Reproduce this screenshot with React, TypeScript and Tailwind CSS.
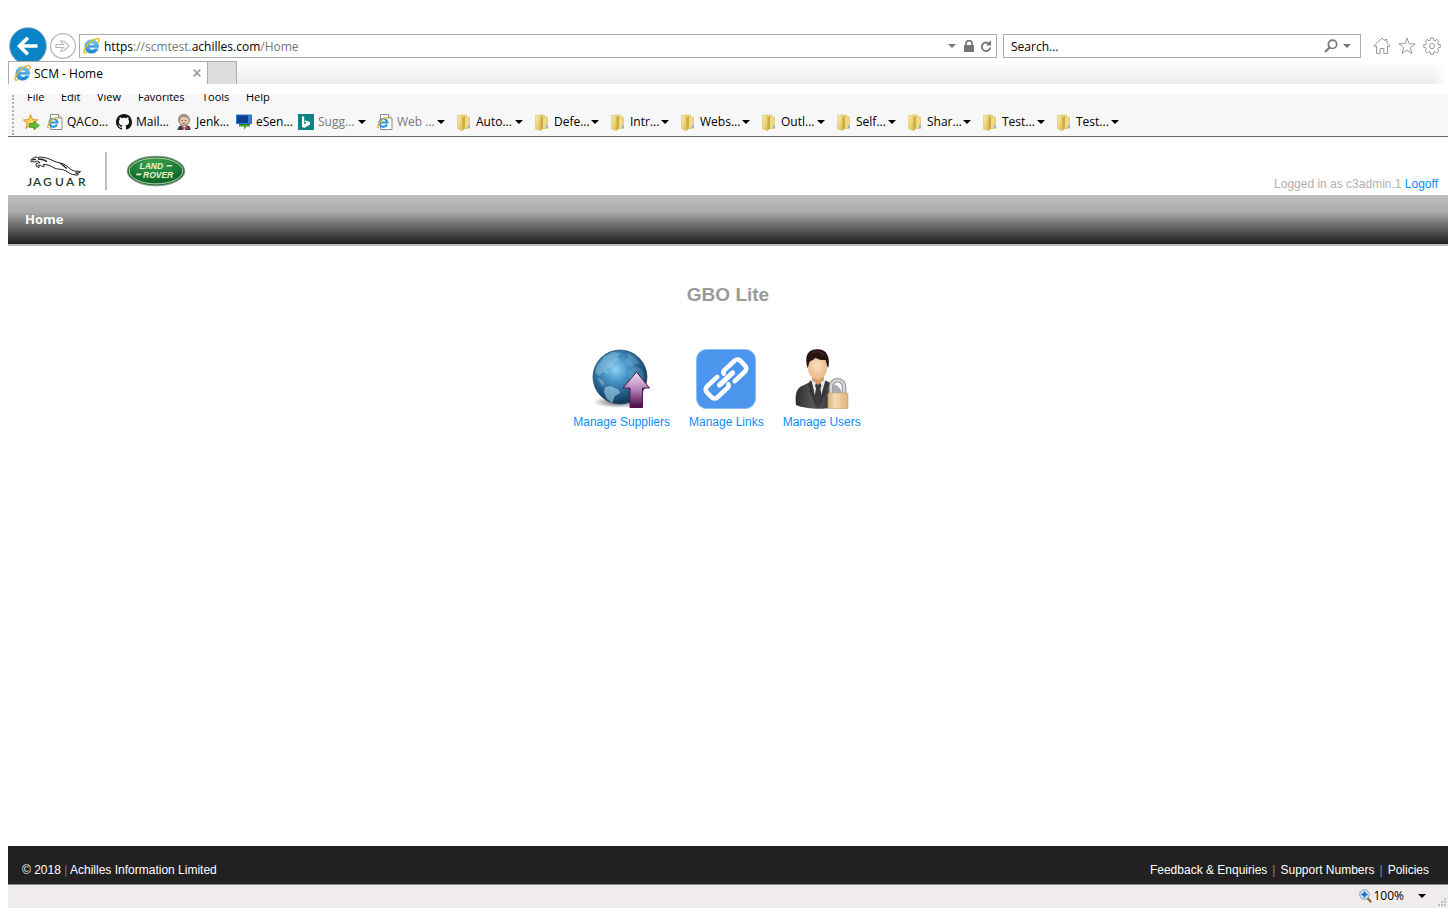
import React from "react";

type Kind = "page" | "github" | "jenkins" | "sensor" | "bing" | "folder";

type Favorite = {
  label: string;
  kind: Kind;
  menu?: boolean;
  muted?: boolean;
  width: string;
};

const favorites: Favorite[] = [
  { label: "QACo...", kind: "page", width: "w-[69px]" },
  { label: "Mail...", kind: "github", width: "w-[60px]" },
  { label: "Jenk...", kind: "jenkins", width: "w-[60px]" },
  { label: "eSen...", kind: "sensor", width: "w-[62px]" },
  { label: "Sugg...", kind: "bing", menu: true, muted: true, width: "w-[79px]" },
  { label: "Web ...", kind: "page", menu: true, muted: true, width: "w-[79px]" },
  { label: "Auto...", kind: "folder", menu: true, width: "w-[78px]" },
  { label: "Defe...", kind: "folder", menu: true, width: "w-[76px]" },
  { label: "Intr...", kind: "folder", menu: true, width: "w-[70px]" },
  { label: "Webs...", kind: "folder", menu: true, width: "w-[81px]" },
  { label: "Outl...", kind: "folder", menu: true, width: "w-[75px]" },
  { label: "Self...", kind: "folder", menu: true, width: "w-[71px]" },
  { label: "Shar...", kind: "folder", menu: true, width: "w-[75px]" },
  { label: "Test...", kind: "folder", menu: true, width: "w-[74px]" },
  { label: "Test...", kind: "folder", menu: true, width: "w-[74px]" },
];

const menus = [
  { label: "File", width: "w-[34px]" },
  { label: "Edit", width: "w-[36px]" },
  { label: "View", width: "w-[41px]" },
  { label: "Favorites", width: "w-[64px]" },
  { label: "Tools", width: "w-[44px]" },
  { label: "Help", width: "w-[40px]" },
];

function BrowserE() {
  return (
    <svg width="17" height="18" viewBox="0 0 18 18" className="shrink-0" aria-hidden="true">
      <defs>
        <linearGradient id="eBlue" x1="0" y1="0" x2="0" y2="1">
          <stop offset="0" stopColor="#6fcbf5" />
          <stop offset="1" stopColor="#1b83cf" />
        </linearGradient>
      </defs>
      <path
        d="M9.200 2.500c4.300 0 7.300 3 7.300 7.300v.9H6.400c.2 1.600 1.400 2.600 3.100 2.600 1.200 0 2.100-.5 2.600-1.300h4c-.9 2.900-3.400 4.700-6.900 4.700-4.400 0-7.300-2.900-7.300-7 0-4.300 3-7.200 7.300-7.200zM6.400 8.200h6c-.2-1.500-1.300-2.500-3-2.500s-2.800 1-3 2.500z"
        fill="url(#eBlue)"
        fillRule="evenodd"
        stroke="#1f7fc4"
        strokeWidth=".4"
      />
      <path d="M3.600 16.200C1.600 17.200.6 16 1.400 13.600 2.500 10.300 6 5.800 10 3.200 13.600.8 16.800.4 16.900 2.500c0 1-.4 2-.9 2.900" fill="none" stroke="#f0b51d" strokeWidth="1.500" strokeLinecap="round" />
    </svg>
  );
}

function PageIcon() {
  return (
    <svg width="16" height="16" viewBox="0 0 16 16" className="shrink-0" aria-hidden="true">
      <path d="M3.500.5h8l3.500 3.500v11.500H3.500z" fill="#fff" stroke="#8c8c8c" />
      <path d="M11.500.5V4H15" fill="#eee" stroke="#8c8c8c" />
      <path d="M10 10.600A4 4 0 1 1 10.400 8.500H3.400" fill="none" stroke="#2f96dc" strokeWidth="2.200" />
      <path d="M2 13.500C.8 14 .3 13.200 1 11.500 2 9 4.500 6 7 4.700c2-1.200 4-1.500 4 0" fill="none" stroke="#efb420" strokeWidth="1.300" />
    </svg>
  );
}

function GithubIcon() {
  return (
    <svg width="16" height="16" viewBox="0 0 16 16" className="shrink-0" aria-hidden="true">
      <path
        fill="#151515"
        d="M8 0C3.580 0 0 3.580 0 8c0 3.540 2.290 6.530 5.470 7.590.4.070.550-.170.550-.380 0-.190-.010-.820-.010-1.490-2.010.370-2.530-.490-2.690-.940-.090-.230-.480-.940-.820-1.130-.280-.150-.680-.520-.010-.530.630-.010 1.080.580 1.230.820.720 1.210 1.870.870 2.330.660.070-.520.280-.870.510-1.070-1.780-.200-3.640-.890-3.640-3.950 0-.870.310-1.590.820-2.150-.080-.200-.360-1.020.080-2.120 0 0 .670-.210 2.200.820.640-.180 1.320-.270 2-.270s1.360.090 2 .270c1.530-1.040 2.200-.820 2.200-.820.440 1.100.160 1.920.080 2.120.510.560.820 1.270.820 2.150 0 3.070-1.870 3.750-3.650 3.950.290.250.540.730.540 1.480 0 1.070-.010 1.930-.010 2.200 0 .210.150.460.550.380A8.010 8.010 0 0 0 16 8c0-4.420-3.580-8-8-8z"
      />
    </svg>
  );
}

function JenkinsIcon() {
  return (
    <svg width="16" height="16" viewBox="0 0 16 16" className="shrink-0" aria-hidden="true">
      <path d="M1.500 16c.3-2.500 1.500-4 3.500-4.500h7c2 .5 2.500 2.500 2.500 4.500z" fill="#35414b" />
      <path d="M6 11h4l-1 5H7.500z" fill="#f3f3f3" />
      <ellipse cx="8" cy="6" rx="5.400" ry="5.600" fill="#e8c7ab" stroke="#6e5a50" strokeWidth=".8" />
      <path d="M2.600 7C1.200 2 5 0 8 .4c3 .3 5.800 2.500 5 5.200C11.500 4 9.500 2.700 7 3 5 3 4.300 5 4 7z" fill="#9c958e" />
      <path d="M5.500 6.500h1.200M9 6.500h1.200M6.500 9.300h2.800" stroke="#5a4038" strokeWidth=".9" />
      <path d="M6.500 12.300l2.800 1.400 2.700-1.700v3.600l-2.700-1.300-2.800 1.500z" fill="#d23a2e" />
    </svg>
  );
}

function SensorIcon() {
  return (
    <svg width="16" height="16" viewBox="0 0 16 16" className="shrink-0" aria-hidden="true">
      <path d="M3 8h11v4.500h-3.500L8 15.800V12.500H3z" fill="#4da52a" />
      <path d="M0 .5h16v9.500H0z" fill="#2f7bd0" />
      <path d="M1 1.500h11v7.500H1z" fill="#123f8e" />
      <path d="M3 10h11v1H3z" fill="#2f7f1c" />
    </svg>
  );
}

function BingIcon() {
  return (
    <svg width="16" height="16" viewBox="0 0 16 16" className="shrink-0" aria-hidden="true">
      <path d="M0 0h16v16H0z" fill="#0c8484" />
      <path d="M4 2l2.200.8v7.500l2.500-1.500-1.200-.6-.8-2L12 8v2.400L6.200 14 4 12.700z" fill="#fff" />
    </svg>
  );
}

function FolderIcon() {
  return (
    <svg width="14" height="17" viewBox="0 0 14 17" className="mr-px ml-px shrink-0" aria-hidden="true">
      <defs>
        <linearGradient id="folder" x1="0" y1="0" x2="1" y2="1">
          <stop offset="0" stopColor="#fbf0b2" />
          <stop offset="1" stopColor="#dfb944" />
        </linearGradient>
      </defs>
      <path d="M4 1h5.500v2H12.500v11.500H4z" fill="#f0d983" stroke="#dcc06c" strokeWidth=".7" />
      <path d="M.5 1l4.300.7L6 3v13.500L4.500 16.300.5 15z" fill="url(#folder)" stroke="#e0c878" strokeWidth=".7" />
      <path d="M5.500 3l2.500-1v12.500l-2.500 2z" fill="#cdab42" />
      <path d="M11.300 11h1.200v3h-1.200z" fill="#63a9d6" />
    </svg>
  );
}

function FavoriteIcon({ kind }: { kind: Kind }) {
  if (kind === "page") return <PageIcon />;
  if (kind === "github") return <GithubIcon />;
  if (kind === "jenkins") return <JenkinsIcon />;
  if (kind === "sensor") return <SensorIcon />;
  if (kind === "bing") return <BingIcon />;
  return <FolderIcon />;
}

function Caret({ className = "text-black" }: { className?: string }) {
  return (
    <svg width="8" height="4" viewBox="0 0 8 4" className={"shrink-0 " + className} aria-hidden="true">
      <path d="M0 0h8L4 4z" fill="currentColor" />
    </svg>
  );
}

function AddressRow() {
  return (
    <div className="flex h-[27px] items-start pr-[7px]">
      <button aria-label="Back" className="-mt-[7px] h-[34px] w-[39px] shrink-0 overflow-hidden pl-px">
        <svg width="38" height="38" viewBox="0 0 38 38">
          <circle cx="19" cy="19" r="18.300" fill="#0a84c6" stroke="#6f98ad" strokeWidth=".8" />
          <path d="M28.500 19H11M18.800 10.700L10.500 19l8.300 8.300" fill="none" stroke="#fff" strokeWidth="3.600" />
        </svg>
      </button>
      <button aria-label="Forward" className="-mt-px ml-[3px] h-[26px] w-[26px] shrink-0">
        <svg width="26" height="26" viewBox="0 0 26 26">
          <circle cx="13" cy="13" r="12.400" fill="#fff" stroke="#b5b5b5" strokeWidth="1.200" />
          <path d="M6 11.500h7.500L10.500 8h3.300l5.200 5-5.200 5h-3.300l3-3.500H6z" fill="#fff" stroke="#b5b5b5" strokeWidth="1.100" />
        </svg>
      </button>
      <div className="ml-[3px] flex h-6 flex-1 items-center border border-[#ababab] bg-white pr-1 pl-[3px]">
        <BrowserE />
        <div className="flex-1 pt-[2px] pl-1 leading-4 text-[#777]" role="textbox" aria-label="Address">
          <span className="text-black">https</span>://scmtest.<span className="text-black">achilles.com</span>/Home
        </div>
        <button aria-label="Show address list" className="mr-2">
          <Caret className="text-[#777]" />
        </button>
        <svg width="10" height="12" viewBox="0 0 10 12" className="mr-[6px]" aria-hidden="true">
          <path d="M2 5.500V3.500a3 2.900 0 0 1 6 0v2" fill="none" stroke="#757575" strokeWidth="1.700" />
          <path d="M0 5h10v7H0z" fill="#757575" />
        </svg>
        <button aria-label="Refresh">
          <svg width="12" height="13" viewBox="0 0 12 13">
            <path d="M9.500 4.200A4.300 4.300 0 1 0 10.300 7.500" fill="none" stroke="#757575" strokeWidth="1.800" />
            <path d="M6 5.500h5V.3z" fill="#757575" />
          </svg>
        </button>
      </div>
      <div className="ml-1.5 flex h-6 w-[358px] shrink-0 items-center border border-[#ababab] bg-white pr-[9px] pl-[7px]">
        <input aria-label="Search" placeholder="Search..." className="min-w-0 flex-1 pt-[2px] leading-4 outline-none placeholder:text-black" />
        <button aria-label="Search" className="mr-[5px]">
          <svg width="14" height="14" viewBox="0 0 14 14">
            <circle cx="8.500" cy="5.300" r="4.200" fill="none" stroke="#777" strokeWidth="1.700" />
            <path d="M5.500 8.500L1 13" stroke="#777" strokeWidth="2.200" />
          </svg>
        </button>
        <button aria-label="Search options">
          <Caret className="text-[#777]" />
        </button>
      </div>
      <div className="ml-3 flex h-6 shrink-0 items-center gap-[7px]">
        <button aria-label="Home page">
          <svg width="18" height="18" viewBox="0 0 18 18" fill="#fff" stroke="#999" strokeWidth="1">
            <path d="M3.500 9v7.500h3.700v-5h3.600v5h3.700V9l1.500 1 1-1.300L14 5.800V2.500h-2v1.300L9 1 1 8.700 2 10z" />
          </svg>
        </button>
        <button aria-label="Favorites">
          <svg width="18" height="18" viewBox="0 0 18 18" fill="#fff" stroke="#999" strokeWidth="1">
            <path d="M9 1l2.100 5.700 6 .2-4.800 3.700L14 16.500 9 13l-5 3.500 1.700-5.900L.9 6.900l6-.2z" />
          </svg>
        </button>
        <button aria-label="Tools">
          <svg width="18" height="18" viewBox="0 0 18 18" fill="#fff" stroke="#999" strokeWidth="1">
            <path d="M7.500 1h3l.3 2.300 1.200.5 1.900-1.400 2 2-1.400 1.900.5 1.200 2.300.3v2.700l-2.300.4-.5 1.200 1.400 1.900-2 2-1.900-1.400-1.200.5-.3 2.200h-3l-.3-2.200-1.200-.5-1.900 1.400-2-2 1.400-1.900-.5-1.200L.8 10.500V7.800L3 7.500l.5-1.200-1.400-1.900 2-2L6 3.800l1.200-.5z" />
            <circle cx="9" cy="9.100" r="2.600" />
          </svg>
        </button>
      </div>
    </div>
  );
}

function TabRow() {
  return (
    <div className="flex h-[23px]">
      <div className="flex w-[200px] shrink-0 items-center border border-b-0 border-[#ababab] bg-white pr-[6px] pl-[5px]">
        <BrowserE />
        <span className="flex-1 pt-[2px] pl-[3px] leading-4">SCM - Home</span>
        <button aria-label="Close tab">
          <svg width="8" height="8" viewBox="0 0 8 8">
            <path d="M.7.7l6.600 6.600M7.300.7L.7 7.300" stroke="#a0a0a0" strokeWidth="1.900" />
          </svg>
        </button>
      </div>
      <button aria-label="New tab" className="w-[29px] shrink-0 border-t border-r border-[#ababab] bg-[#dcdcdc]" />
      <div className="flex flex-1 justify-end bg-linear-to-b from-white to-[#ebebeb]">
        <div className="w-4 bg-linear-to-r from-white/0 to-white" />
      </div>
    </div>
  );
}

function MenuArea() {
  return (
    <div className="mt-[10px] flex h-[43px] border-b border-[#6d6d6d] bg-[#f7f7f7]">
      <div className="my-px ml-1 w-[2px] border-l-2 border-dotted border-[#b4b4b4]" />
      <div className="min-w-0 flex-1">
        <div className="flex h-[14px] items-start overflow-hidden pl-[13px]">
          {menus.map((menu) => (
            <button key={menu.label} className={"-mt-[5px] shrink-0 text-left text-[11px] leading-4 " + menu.width}>
              {menu.label}
            </button>
          ))}
        </div>
        <div className="flex h-7 items-center pl-[9px]">
          <button aria-label="Add to favorites" className="w-6 shrink-0">
            <svg width="17" height="16" viewBox="0 0 17 16">
              <path d="M7.500 1l2 4.500 5 .5-3.800 3.200 1.100 5-4.300-2.600-4.400 2.600 1.200-5L.6 6l5-.5z" fill="#fcd75e" stroke="#d89b2e" strokeWidth="1.100" />
              <path d="M6.500 9.700H11V7.300l5.300 4.200-5.300 4v-2.300H6.500z" fill="#62c435" stroke="#2e8a1e" strokeWidth=".9" />
            </svg>
          </button>
          {favorites.map((item, index) => (
            <button key={index} className={"flex shrink-0 items-center " + item.width}>
              <FavoriteIcon kind={item.kind} />
              <span className={"pl-1 text-[12px] leading-4 whitespace-nowrap " + (item.muted ? "text-[#777]" : "text-black")}>
                {item.label}
              </span>
              {item.menu && (
                <span className="mr-[11px] ml-auto">
                  <Caret />
                </span>
              )}
            </button>
          ))}
        </div>
      </div>
    </div>
  );
}

function Logos() {
  return (
    <div className="flex items-center pl-[18px]">
      <svg width="62" height="36" viewBox="0 0 62 36" role="img" aria-label="Jaguar">
        <g transform="translate(0 3)">
          <path
            d="M5 5.500C4.300 3.500 6 2 8 2l2-1.200L11.500 1.500C16 .5 22 2 27 4.700c5 2.500 9 1.800 13 4.700 3 2.200 4.500 5 8.500 5.600l6 .5-1 1.300-4 .2 3 1-1 1.200-5-.7c-3-.7-5.500-3.500-9-4.700-3-.8-6.500-.4-9.500-2-2.500-1.300-5-3-8.500-3.200L17 8.500l1.500 1.300-1.200 1.200-3-1.800-2.500.2 1.500 1-.5 1.300-2.800-1.700.3-2.600 3.700-.8L11.500 5 8.500 6z"
            fill="#fff"
            stroke="#202020"
            strokeWidth="1"
            strokeLinejoin="round"
          />
          <path d="M12 3c4 0 7 1 9 2.800M34 7.500c3 1 4 3.500 7 5M6 3.800l4-.5" fill="none" stroke="#202020" strokeWidth="1.300" />
        </g>
        <text y="33" fontFamily="Lato, sans-serif" fontWeight="600" fontSize="12" fill="#26392f">
          <tspan x="1">J</tspan>
          <tspan x="7">A</tspan>
          <tspan x="17">G</tspan>
          <tspan x="29">U</tspan>
          <tspan x="40">A</tspan>
          <tspan x="52">R</tspan>
        </text>
      </svg>
      <div className="ml-[17px] h-[38px] w-[2px] bg-[#bdbdbd]" />
      <svg width="60" height="32" viewBox="0 0 60 32" className="ml-[19px]" role="img" aria-label="Land Rover">
        <defs>
          <radialGradient id="lrGreen" cx=".45" cy=".2" r=".7">
            <stop offset="0" stopColor="#3fa14d" />
            <stop offset="1" stopColor="#0c6a2c" />
          </radialGradient>
        </defs>
        <ellipse cx="30" cy="16" rx="29.300" ry="15.300" fill="#8d9f8c" />
        <ellipse cx="30" cy="16" rx="28.300" ry="14.300" fill="#176b30" />
        <ellipse cx="30" cy="16" rx="26.800" ry="12.900" fill="url(#lrGreen)" stroke="#cfe0b8" strokeWidth=".9" />
        <g fontFamily="Liberation Sans, sans-serif" fontWeight="700" fontStyle="italic" fontSize="8.500" fill="#f0f2c8">
          <text x="13.500" y="14">LAND</text>
          <text x="17" y="23">ROVER</text>
        </g>
        <path d="M41 10h5.500l-1 1.600h-5zM10.500 18.500h5l-.6 1.700H10z" fill="#f0f2c8" />
      </svg>
    </div>
  );
}

function SuppliersIcon() {
  return (
    <svg width="60" height="60" viewBox="0 0 60 60" aria-hidden="true">
      <defs>
        <radialGradient id="globe" cx=".42" cy=".36" r=".62">
          <stop offset="0" stopColor="#90d4f5" />
          <stop offset=".35" stopColor="#4a97c9" />
          <stop offset=".75" stopColor="#235c88" />
          <stop offset="1" stopColor="#123a5b" />
        </radialGradient>
        <radialGradient id="globeShadow">
          <stop offset="0" stopColor="#222" stopOpacity=".75" />
          <stop offset="1" stopColor="#222" stopOpacity="0" />
        </radialGradient>
        <linearGradient id="arrowFill" x1="0" y1="0" x2="0" y2="1">
          <stop offset="0" stopColor="#f2e3f2" />
          <stop offset=".5" stopColor="#b57fb6" />
          <stop offset="1" stopColor="#4b0744" />
        </linearGradient>
      </defs>
      <ellipse cx="26" cy="53" rx="25" ry="6" fill="url(#globeShadow)" />
      <circle cx="28" cy="28" r="27" fill="url(#globe)" stroke="#1b4568" strokeWidth=".7" />
      <g fill="#a9d6ec" fillOpacity=".4">
        <path d="M5 17l7-9 9-5 8 1-4 4 3 3-6 3-3 5-4 1 1 5-5-2-4 4-4-3z" />
        <path d="M35 4l8 4 5 6-5 1-3 4-4-3-3-5 3-2z" fillOpacity=".25" />
        <path d="M13 38l6-1 8 4 1 3-5 3-3 7-5-4-3-7z" fillOpacity=".6" />
        <path d="M37 22l5-4 6 1 4 5v9l-6 4-3-5-6-3z" fillOpacity=".2" />
        <path d="M5 28l5 3 3 4-3 2z" />
      </g>
      <path d="M44.500 23L57.500 39h-7v19.500H38V39h-7z" fill="url(#arrowFill)" stroke="#511350" strokeWidth="1" />
    </svg>
  );
}

function LinksIcon() {
  return (
    <svg width="60" height="60" viewBox="0 0 60 60" aria-hidden="true">
      <rect x=".5" y=".5" width="59" height="59" rx="10" fill="#4b96ec" stroke="#8bbcf3" />
      <g transform="translate(30 30) rotate(-43)" fill="none" stroke="#fff" strokeWidth="4.600" strokeLinecap="round">
        <path d="M-5 -7.500H-19a4 4 0 0 0-4 4V3.500a4 4 0 0 0 4 4H-5a3 3 0 0 0 3-2" />
        <path d="M5 7.500H19a4 4 0 0 0 4-4V-3.500a4 4 0 0 0-4-4H5a3 3 0 0 0-3 2" />
        <path d="M-9 0H9" strokeWidth="5" />
      </g>
    </svg>
  );
}

function UsersIcon() {
  return (
    <svg width="60" height="60" viewBox="0 0 60 60" aria-hidden="true">
      <defs>
        <radialGradient id="face" cx=".48" cy=".45" r=".6">
          <stop offset="0" stopColor="#fde0bd" />
          <stop offset="1" stopColor="#e6b281" />
        </radialGradient>
        <linearGradient id="suit" x1="0" y1="0" x2="1" y2="0">
          <stop offset="0" stopColor="#2c2c2c" />
          <stop offset=".35" stopColor="#565656" />
          <stop offset="1" stopColor="#2c2c2c" />
        </linearGradient>
        <linearGradient id="lockBody" x1="0" y1="0" x2="1" y2="0">
          <stop offset="0" stopColor="#d8b07c" />
          <stop offset=".35" stopColor="#f6dab2" />
          <stop offset="1" stopColor="#dcb37e" />
        </linearGradient>
      </defs>
      <path d="M4 56C3 46 4 39 11 36.500L20 32h14l10 4c6 3 7 11 6 20-12 5-34 5-46 0z" fill="url(#suit)" />
      <path d="M19.500 31l6 27 8-27z" fill="#e9eaee" />
      <path d="M24 34h4.500l1 3-1 2 1.500 13-4 7-4-7L24 39l-1-2z" fill="#3c3c40" />
      <path d="M19 31l-4 5 3 3-1 3 8 17-4-20zM34 31l3 5-3 3 1 3-9 17 6-20z" fill="#383838" />
      <path d="M20 24h12v7l-6 5-6-5z" fill="#d79c63" />
      <ellipse cx="25.500" cy="18" rx="9.800" ry="12.800" fill="url(#face)" />
      <path d="M15.500 19C12.500 9 15 1 23 .5c9-1.500 16 4 13.300 18.500-1.300-1.500-1.600-5-2.800-8-4 .3-8-.8-10-2.300-1.500 2.300-5 2.800-6 4.300-.8 1.500-.8 4-2 6z" fill="#27140f" />
      <path d="M20 4c4-3 10-1 12 2" fill="none" stroke="#44291f" strokeWidth="1.500" />
      <path d="M39 45v-7c0-9 13-9 13 0v7" fill="#fff" fillOpacity=".6" stroke="#8d9094" strokeWidth="4.500" />
      <path d="M39 45v-7c0-9 13-9 13 0v7" fill="none" stroke="#d5d8da" strokeWidth="2.500" />
      <rect x="36" y="44" width="20" height="15.500" rx="1" fill="url(#lockBody)" stroke="#cf9e65" strokeWidth=".6" />
    </svg>
  );
}

const tiles = [
  { label: "Manage Suppliers", Icon: SuppliersIcon },
  { label: "Manage Links", Icon: LinksIcon },
  { label: "Manage Users", Icon: UsersIcon },
];

export default function App() {
  return (
    <div className="flex min-h-screen flex-col bg-white px-2 pt-[34px] pb-2 font-['Liberation_Sans',sans-serif] text-[12px] leading-4">
      <div className="font-['Open_Sans','Noto_Sans',sans-serif] text-[12px] text-black">
        <AddressRow />
        <TabRow />
        <MenuArea />
      </div>

      <header>
        <div className="flex h-[58px] items-end justify-between">
          <div className="pb-[5px]">
            <Logos />
          </div>
          <p className="pr-[10px] pb-[3px] text-[#b0b0b0]">
            Logged in as c3admin.1{" "}
            <a href="#logoff" className="text-[#0a8cff]">
              Logoff
            </a>
          </p>
        </div>
        <nav className="flex h-[51px] items-center border-b-2 border-[#bcbcbc] bg-linear-to-b from-[#c0c0c0] via-[#aaaaaa] via-35% to-[#202020] pb-[2px] pl-[17px]">
          <a href="#home" className="font-['Open_Sans','Noto_Sans',sans-serif] text-[13px] leading-5 font-bold text-white">
            Home
          </a>
        </nav>
      </header>

      <main className="flex-1 pt-[37px] text-center">
        <h1 className="text-[19px] leading-6 font-bold text-[#999]">GBO Lite</h1>
        <div className="mt-[42px] flex justify-center gap-[19px] pr-[22px]">
          {tiles.map(({ label, Icon }) => (
            <a key={label} href="#manage" className="flex flex-col items-center gap-[5px] text-[#0a8cff]">
              <Icon />
              {label}
            </a>
          ))}
        </div>
      </main>

      <footer className="flex h-[38px] items-center justify-between bg-[#212121] pt-[10px] pr-[19px] pl-[14px] text-white">
        <p>
          © 2018 <span className="text-[#777]">|</span> Achilles Information Limited
        </p>
        <div className="flex gap-[5px]">
          <a href="#feedback">Feedback &amp; Enquiries</a>
          <span className="text-[#888]">|</span>
          <a href="#support">Support Numbers</a>
          <span className="text-[#888]">|</span>
          <a href="#policies">Policies</a>
        </div>
      </footer>
      <div className="flex h-6 items-center justify-end border-t border-b border-t-[#8b8585] border-b-[#ececec] bg-[#f0eceb] font-['Open_Sans','Noto_Sans',sans-serif] text-black">
        <svg width="13" height="14" viewBox="0 0 13 14" aria-hidden="true">
          <path d="M8 8.500l3.500 4" stroke="#9a6a3a" strokeWidth="2.400" strokeLinecap="round" />
          <circle cx="5.500" cy="5.500" r="4.800" fill="#d7ecfb" stroke="#8799a8" />
          <path d="M5.500 2.500v6M2.500 5.500h6" stroke="#1668c4" strokeWidth="2" />
        </svg>
        <button className="flex items-center gap-[14px] pl-px">
          100%
          <Caret />
        </button>
        <svg width="9" height="9" viewBox="0 0 9 9" className="mr-px ml-3 self-end" fill="#c2bebd" aria-hidden="true">
          <path d="M6 0h2v2H6zM3 3h2v2H3zM6 3h2v2H6zM0 6h2v2H0zM3 6h2v2H3zM6 6h2v2H6z" />
        </svg>
      </div>
    </div>
  );
}
